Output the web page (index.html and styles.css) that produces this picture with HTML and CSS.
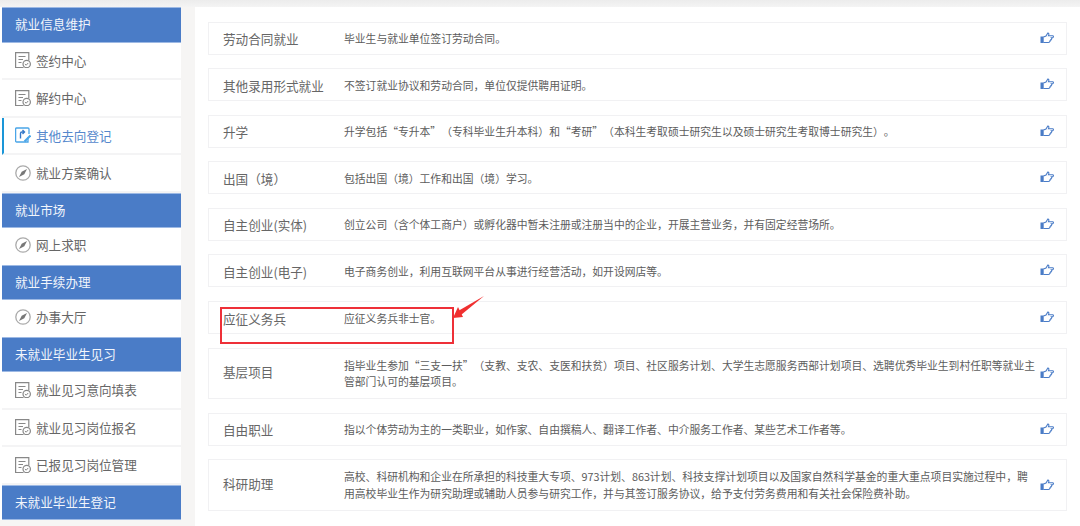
FILE: index.html
```html
<!DOCTYPE html>
<html lang="zh">
<head>
<meta charset="utf-8">
<title>就业信息维护</title>
<link rel="stylesheet" href="styles.css">
</head>
<body>
<svg class="defs" width="0" height="0">
  <symbol id="doc" viewBox="0 0 16 16"><path d="M8.500 15.500H.6V.6h13.200v8M3.500 4.500h7M3.500 7.500h4.500M3.500 10.500h3" fill="none" stroke="currentColor" stroke-width="1.200"/><circle cx="11.700" cy="12" r="3.700" fill="#fff" stroke="currentColor" stroke-width="1.200"/><path d="M9.900 12l1.300 1.200 2-2.200" fill="none" stroke="currentColor"/></symbol>
  <symbol id="compass" viewBox="0 0 16 16"><circle cx="8" cy="8" r="7.200" fill="#fff" stroke="#aaa" stroke-width="1.300"/><path d="M12 4L9.300 9.300 4 12 6.700 6.700z" fill="#777"/></symbol>
  <symbol id="other" viewBox="0 0 16 16"><path d="M13 10V15H1.600Q.6 15 .6 14V2Q.6 1 1.600 1H13Q14 1 14 2V7" fill="none" stroke="currentColor" stroke-width="1.300"/><path d="M5.500 11.500V6.500Q5.500 5 7 5H9M7.500 3l2 2-2 2" fill="none" stroke="#3578c8" stroke-width="1.400"/><path d="M9.500 14.500l6-6" stroke="currentColor" stroke-width="2.200"/></symbol>
  <symbol id="thumb" viewBox="0 0 14 12"><rect x="0.500" y="4.500" width="3.200" height="6.500" fill="#4a7cc7"/><path d="M3.500 5L6 4 7.800 1c1.300 0 1.300 1.200 .7 2.800H12.800c1 0 .7 1.700-.2 2H11.500c.6 .6 0 1.800-.6 1.800 .2 .8-.5 1.500-1 1.400 0 1-.7 1.500-1.500 1.500H3.500" fill="none" stroke="#4a7cc7" stroke-width="1.100"/></symbol>
</svg>
<div class="page">
  <nav class="side">
    <h3 class="head">就业信息维护</h3>
    <a class="item"><svg class="ico"><use href="#doc"/></svg>签约中心</a>
    <a class="item"><svg class="ico"><use href="#doc"/></svg>解约中心</a>
    <a class="item active"><svg class="ico"><use href="#other"/></svg>其他去向登记</a>
    <a class="item"><svg class="ico"><use href="#compass"/></svg>就业方案确认</a>
    <h3 class="head">就业市场</h3>
    <a class="item short"><svg class="ico"><use href="#compass"/></svg>网上求职</a>
    <h3 class="head">就业手续办理</h3>
    <a class="item short"><svg class="ico"><use href="#compass"/></svg>办事大厅</a>
    <h3 class="head">未就业毕业生见习</h3>
    <a class="item"><svg class="ico"><use href="#doc"/></svg>就业见习意向填表</a>
    <a class="item"><svg class="ico"><use href="#doc"/></svg>就业见习岗位报名</a>
    <a class="item"><svg class="ico"><use href="#doc"/></svg>已报见习岗位管理</a>
    <h3 class="head">未就业毕业生登记</h3>
  </nav>
  <main class="panel">
    <div class="row"><div class="name">劳动合同就业</div><p class="desc">毕业生与就业单位签订劳动合同。</p><svg class="thumb"><use href="#thumb"/></svg></div>
    <div class="row"><div class="name">其他录用形式就业</div><p class="desc">不签订就业协议和劳动合同，单位仅提供聘用证明。</p><svg class="thumb"><use href="#thumb"/></svg></div>
    <div class="row"><div class="name">升学</div><p class="desc">升学包括“专升本”（专科毕业生升本科）和“考研”（本科生考取硕士研究生以及硕士研究生考取博士研究生）。</p><svg class="thumb"><use href="#thumb"/></svg></div>
    <div class="row"><div class="name">出国（境）</div><p class="desc">包括出国（境）工作和出国（境）学习。</p><svg class="thumb"><use href="#thumb"/></svg></div>
    <div class="row"><div class="name">自主创业(实体)</div><p class="desc">创立公司（含个体工商户）或孵化器中暂未注册或注册当中的企业，开展主营业务，并有固定经营场所。</p><svg class="thumb"><use href="#thumb"/></svg></div>
    <div class="row"><div class="name">自主创业(电子)</div><p class="desc">电子商务创业，利用互联网平台从事进行经营活动，如开设网店等。</p><svg class="thumb"><use href="#thumb"/></svg></div>
    <div class="row"><div class="name">应征义务兵</div><p class="desc">应征义务兵非士官。</p><svg class="thumb"><use href="#thumb"/></svg>
      <div class="mark"></div>
      <svg class="arrow" viewBox="0 0 32 24"><path d="M31 0L6 14.500 8 19z" fill="#f03030"/><path d="M0 22L5 11 10 21z" fill="#f03030"/></svg>
    </div>
    <div class="row tall"><div class="name">基层项目</div><p class="desc">指毕业生参加“三支一扶”（支教、支农、支医和扶贫）项目、社区服务计划、大学生志愿服务西部计划项目、选聘优秀毕业生到村任职等就业主管部门认可的基层项目。</p><svg class="thumb"><use href="#thumb"/></svg></div>
    <div class="row"><div class="name">自由职业</div><p class="desc">指以个体劳动为主的一类职业，如作家、自由撰稿人、翻译工作者、中介服务工作者、某些艺术工作者等。</p><svg class="thumb"><use href="#thumb"/></svg></div>
    <div class="row tall"><div class="name">科研助理</div><p class="desc">高校、科研机构和企业在所承担的科技重大专项、973计划、863计划、科技支撑计划项目以及国家自然科学基金的重大重点项目实施过程中，聘用高校毕业生作为研究助理或辅助人员参与研究工作，并与其签订服务协议，给予支付劳务费用和有关社会保险费补助。</p><svg class="thumb"><use href="#thumb"/></svg></div>
  </main>
</div>
</body>
</html>
```
FILE: styles.css
```css
* { box-sizing: border-box; }
html, body { margin: 0; height: 526px; overflow: hidden; }
body { background: #f6f5f4; font-family: "Noto Sans CJK SC", "Liberation Sans", sans-serif; color: #666; text-spacing-trim: space-all; font-feature-settings: "chws" 0, "halt" 0, "palt" 0; }
.defs { position: absolute; }
.page { display: flex; align-items: flex-start; padding-top: 7px; gap: 14px; background: linear-gradient(#ececec, #f4f4f4) no-repeat 0 0 / 100% 7px; }
.side { width: 181px; flex: none; display: flex; flex-direction: column; border-left: 2px solid #fff; }
.head { margin: 0; height: 35.5px; background: #4a7cc7; border-top: 1px solid #9db9e4; border-bottom: 1px solid #9db9e4; color: #f2f6fc; font-size: 12.6px; font-weight: 400; line-height: 31px; padding-left: 13px; }
.item { height: 37.5px; border-bottom: 2px solid #f4f4f5; background: #fff; display: flex; align-items: center; gap: 5px; padding-left: 13px; font-size: 12.6px; color: #666; }
.item.short { height: 36.500px; border-bottom: 0; padding-bottom: 3px; }
.item.active { color: #5588cc; border-left: 2px solid #1a96d8; padding-left: 11px; }
.item.active .ico { color: #4aa5e8; }
.ico { width: 16px; height: 16px; color: #888; flex: none; }
.panel { flex: 1; background: #fff; padding: 14.500px 13px 0 13px; display: flex; flex-direction: column; gap: 13.600px; height: 519px; }
.row { position: relative; height: 33px; border: 1px solid #f1f1f3; display: flex; align-items: center; padding: 1px 12px 0 14px; flex: none; }
.row.tall { height: 51.500px; padding-top: 0; }
.name { width: 121px; flex: none; font-size: 12.6px; color: #666; }
.tall .name { padding-bottom: 4px; }
.desc { margin: 0 3px 0 0; flex: 1; font-size: 10.8px; line-height: 16.800px; color: #5c5c5c; }
.thumb { width: 14px; height: 12px; flex: none; margin-top: -2px; }
.tall .thumb { margin-top: 0; }
.mark { position: absolute; left: 11px; top: 5px; width: 234px; height: 37px; border: 2px solid #ee3038; }
.arrow { position: absolute; left: 244px; top: -6px; width: 32px; height: 24px; }
```
